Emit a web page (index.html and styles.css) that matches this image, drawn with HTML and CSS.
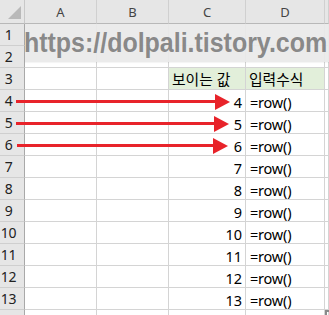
FILE: index.html
```html
<!DOCTYPE html>
<html lang="ko">
<head>
<meta charset="utf-8">
<link rel="stylesheet" href="styles.css">
</head>
<body>
<div class="sheet">
  <div class="grid">
    <div class="corner"><span class="tri"></span></div>
    <div class="colh">A</div><div class="colh">B</div><div class="colh">C</div><div class="colh">D</div><div class="colh"></div>

    <div class="rowh">1</div><div class="cell"></div><div class="cell"></div><div class="cell"></div><div class="cell"></div><div class="cell"></div>
    <div class="rowh">2</div><div class="cell"></div><div class="cell"></div><div class="cell"></div><div class="cell"></div><div class="cell"></div>
    <div class="rowh">3</div><div class="cell"></div><div class="cell"></div><div class="cell lbl">보이는 값</div><div class="cell lbl">입력수식</div><div class="cell"></div>
    <div class="rowh">4</div><div class="cell"></div><div class="cell"></div><div class="cell num">4</div><div class="cell txt">=row()</div><div class="cell"></div>
    <div class="rowh">5</div><div class="cell"></div><div class="cell"></div><div class="cell num">5</div><div class="cell txt">=row()</div><div class="cell"></div>
    <div class="rowh">6</div><div class="cell"></div><div class="cell"></div><div class="cell num">6</div><div class="cell txt">=row()</div><div class="cell"></div>
    <div class="rowh">7</div><div class="cell"></div><div class="cell"></div><div class="cell num">7</div><div class="cell txt">=row()</div><div class="cell"></div>
    <div class="rowh">8</div><div class="cell"></div><div class="cell"></div><div class="cell num">8</div><div class="cell txt">=row()</div><div class="cell"></div>
    <div class="rowh">9</div><div class="cell"></div><div class="cell"></div><div class="cell num">9</div><div class="cell txt">=row()</div><div class="cell"></div>
    <div class="rowh">10</div><div class="cell"></div><div class="cell"></div><div class="cell num">10</div><div class="cell txt">=row()</div><div class="cell"></div>
    <div class="rowh">11</div><div class="cell"></div><div class="cell"></div><div class="cell num">11</div><div class="cell txt">=row()</div><div class="cell"></div>
    <div class="rowh">12</div><div class="cell"></div><div class="cell"></div><div class="cell num">12</div><div class="cell txt">=row()</div><div class="cell"></div>
    <div class="rowh">13</div><div class="cell"></div><div class="cell"></div><div class="cell num">13</div><div class="cell txt">=row()</div><div class="cell"></div>
    <div class="rowh"></div><div class="cell"></div><div class="cell"></div><div class="cell"></div><div class="cell"></div><div class="cell"></div>
  </div>

  <div class="band"><span class="wm">https://dolpali.tistory.com</span></div>

  <svg class="arrows" width="329" height="315" viewBox="0 0 329 315">
    <g fill="#e8232a" stroke="none">
      <rect x="16" y="100" width="200" height="3"/>
      <polygon points="215,94 230,102 215,110"/>
      <rect x="16" y="122" width="200" height="3"/>
      <polygon points="214,116 229,124 214,132"/>
      <rect x="17" y="144" width="198" height="3"/>
      <polygon points="213,138 228,146 213,154"/>
    </g>
  </svg>

  <span class="handle"></span>
</div>
</body>
</html>
```

FILE: styles.css
```css
* { box-sizing: border-box; }

html, body {
  margin: 0;
  padding: 0;
  background: #ffffff;
}

.sheet {
  position: relative;
  width: 329px;
  height: 315px;
  overflow: hidden;
  font-family: "Noto Sans", "Noto Sans CJK KR", sans-serif;
}

.grid {
  display: grid;
  grid-template-columns: 25px 72px 72px 77px 79px 1fr;
  grid-template-rows: 24px repeat(14, 22px);
}

.corner {
  background: #e6e6e6;
  border-right: 1px solid #c8c8c8;
  border-bottom: 1px solid #b8b8b8;
  display: flex;
  justify-content: flex-end;
  align-items: flex-end;
  padding: 0 3px 4px 0;
}

.tri {
  width: 0;
  height: 0;
  border-left: 13px solid transparent;
  border-bottom: 13px solid #b9b9b9;
}

.colh {
  background: #e6e6e6;
  border-right: 1px solid #d0d0d0;
  border-bottom: 1px solid #b8b8b8;
  display: flex;
  align-items: center;
  justify-content: center;
  font-size: 13px;
  color: #444444;
  padding-top: 1px;
}

.rowh {
  background: #e6e6e6;
  border-right: 1px solid #a9a9a9;
  border-bottom: 1px solid #cfcfcf;
  display: flex;
  align-items: center;
  justify-content: center;
  padding-right: 7px;
  font-size: 14px;
  color: #222222;
  letter-spacing: -0.3px;
}

.cell {
  border-right: 1px solid #d4d4d4;
  border-bottom: 1px solid #d4d4d4;
  display: flex;
  align-items: flex-end;
  font-size: 14.5px;
  line-height: 15px;
  color: #000000;
  white-space: nowrap;
  padding-bottom: 1px;
}

.lbl {
  background: #e2efda;
  padding-left: 3px;
  padding-bottom: 2px;
  font-size: 14.8px;
}

.num {
  justify-content: flex-end;
  padding-right: 3px;
}

.txt {
  padding-left: 4px;
  letter-spacing: -0.2px;
}

.band {
  position: absolute;
  left: 25px;
  top: 24px;
  right: 0;
  height: 38px;
  background: rgba(233, 233, 233, 0.93);
  box-shadow: 0 1px 1px rgba(0, 0, 0, 0.04);
  overflow: hidden;
  white-space: nowrap;
}

.wm {
  display: block;
  font-family: "Liberation Sans", Arial, sans-serif;
  font-weight: bold;
  font-size: 25px;
  line-height: 30px;
  letter-spacing: -0.02px;
  margin-top: 2px;
  margin-left: -1px;
  transform: scaleY(1.1);
  transform-origin: 0 0;
  color: rgba(110, 110, 110, 0.8);
}

.arrows {
  position: absolute;
  left: 0;
  top: 0;
  pointer-events: none;
}

.handle {
  position: absolute;
  left: 325px;
  top: 310px;
  width: 6px;
  height: 6px;
  border-left: 2px solid #8a8a8a;
  border-top: 2px solid #8a8a8a;
}
```
